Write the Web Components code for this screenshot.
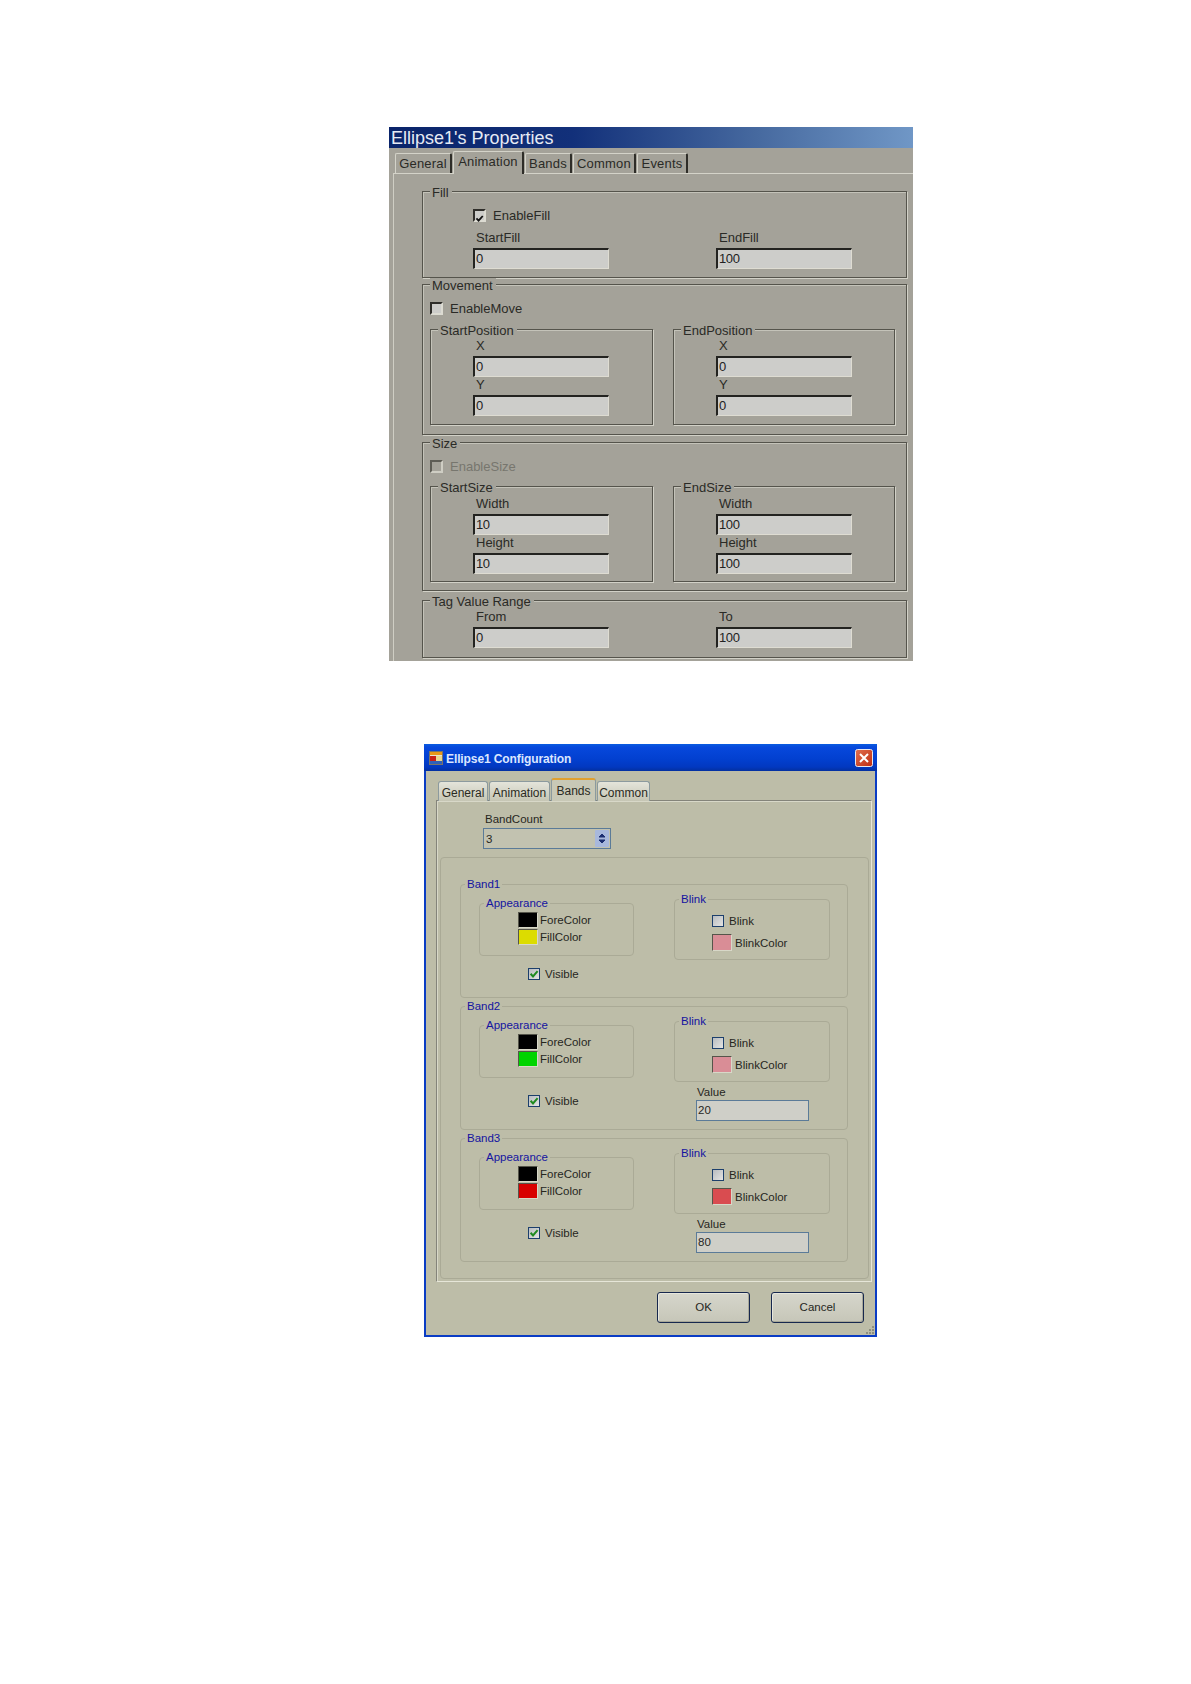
<!DOCTYPE html>
<html>
<head>
<meta charset="utf-8">
<title>Ellipse1</title>
<style>
  html, body { margin: 0; background: #fff; }
  body { font-family: "Liberation Sans", Arial, sans-serif; }
  .page { display: flex; flex-direction: column; align-items: flex-start; padding: 127px 0 0 389px; }
  .page > band-window { margin: 83px 0 0 35px; }
</style>
</head>
<body>
<div class="page">
  <props-window title="Ellipse1's Properties">
    <classic-tab slot="tabs" style="width:57px">General</classic-tab>
    <classic-tab slot="tabs" style="width:71px" active>Animation</classic-tab>
    <classic-tab slot="tabs" style="width:47px">Bands</classic-tab>
    <classic-tab slot="tabs" style="width:63px">Common</classic-tab>
    <classic-tab slot="tabs" style="width:51px">Events</classic-tab>

    <classic-group legend="Fill" style="padding:15px 0 8px 50px">
      <classic-check label="EnableFill" checked></classic-check>
      <div style="display:grid;grid-template-columns:243px 136px;margin-top:7px">
        <classic-field label="StartFill" value="0"></classic-field>
        <classic-field label="EndFill" value="100"></classic-field>
      </div>
    </classic-group>

    <classic-group legend="Movement" style="margin-top:6px;padding:15px 0 9px 7px">
      <classic-check label="EnableMove"></classic-check>
      <div style="display:flex;gap:20px;margin-top:13px">
        <classic-group legend="StartPosition" style="width:223px;padding:8px 0 8px 42px">
          <classic-field label="X" value="0"></classic-field>
          <classic-field label="Y" value="0"></classic-field>
        </classic-group>
        <classic-group legend="EndPosition" style="width:222px;padding:8px 0 8px 42px">
          <classic-field label="X" value="0"></classic-field>
          <classic-field label="Y" value="0"></classic-field>
        </classic-group>
      </div>
    </classic-group>

    <classic-group legend="Size" style="margin-top:7px;padding:15px 0 8px 7px">
      <classic-check label="EnableSize" disabled></classic-check>
      <div style="display:flex;gap:20px;margin-top:12px">
        <classic-group legend="StartSize" style="width:223px;padding:9px 0 7px 42px">
          <classic-field label="Width" value="10"></classic-field>
          <classic-field label="Height" value="10"></classic-field>
        </classic-group>
        <classic-group legend="EndSize" style="width:222px;padding:9px 0 7px 42px">
          <classic-field label="Width" value="100"></classic-field>
          <classic-field label="Height" value="100"></classic-field>
        </classic-group>
      </div>
    </classic-group>

    <classic-group legend="Tag Value Range" style="margin-top:9px;padding:8px 0 9px 50px">
      <div style="display:grid;grid-template-columns:243px 136px">
        <classic-field label="From" value="0"></classic-field>
        <classic-field label="To" value="100"></classic-field>
      </div>
    </classic-group>
  </props-window>

  <band-window title="Ellipse1 Configuration">
    <xp-tab slot="tabs" style="width:50px">General</xp-tab>
    <xp-tab slot="tabs" style="width:61px">Animation</xp-tab>
    <xp-tab slot="tabs" style="width:45px" active>Bands</xp-tab>
    <xp-tab slot="tabs" style="width:53px">Common</xp-tab>

    <band-count slot="head" label="BandCount" value="3"></band-count>

    <band-group name="Band1" fill="#dcdc00" blink="#d98d96" gap="10" tail="15"></band-group>
    <band-group name="Band2" fill="#00d400" blink="#d98d96" gap="15" tail="12" value="20"></band-group>
    <band-group name="Band3" fill="#d80000" blink="#d94c50" gap="15" tail="12" value="80"></band-group>
  </band-window>
</div>

<script>
const mark = (color) => `<svg viewBox="0 0 10 10" width="100%" height="100%"><path d="M1.6 4.8 L4 7.4 L8.6 2.2" fill="none" stroke="${color}" stroke-width="2"/></svg>`;

function shadow(el, html) {
  const root = el.attachShadow({ mode: 'open' });
  root.innerHTML = html;
  return root;
}

/* ---------- first dialog, classic grey look ---------- */

class PropsWindow extends HTMLElement {
  connectedCallback() {
    const root = shadow(this, `
<style>
  :host { display: block; width: 524px; height: 534px; overflow: hidden; box-sizing: border-box;
          background: #a4a299; font-family: "Liberation Sans", Arial, sans-serif; font-size: 13px; color: #1c1c18; }
  .bar { height: 21px; padding-left: 2px; line-height: 23px; font-size: 18px; color: #e6eaf4;
         background: linear-gradient(90deg, #0a246a 0%, #12307a 35%, #46699f 70%, #7097c6 100%); }
  .tabs { display: flex; align-items: flex-end; height: 25px; padding-left: 6px; }
  .panel { margin-left: 4px; padding: 17px 6px 0 28px; border-top: 1px solid #d4d3c9; border-left: 1px solid #cfcec4; height: 100%; box-sizing: border-box; }
</style>
<div class="bar"></div>
<div class="tabs"><slot name="tabs"></slot></div>
<div class="panel"><slot></slot></div>`);
    root.querySelector('.bar').textContent = this.getAttribute('title');
    this.removeAttribute('title');
  }
}
customElements.define('props-window', PropsWindow);

class ClassicTab extends HTMLElement {
  connectedCallback() {
    shadow(this, `
<style>
  :host { display: block; box-sizing: border-box; height: 20px; margin-right: 1px; text-align: center; line-height: 20px; white-space: nowrap;
          border-top: 1px solid #d4d3c9; border-left: 1px solid #d4d3c9; border-right: 2px solid #2e2d28; border-radius: 2px 2px 0 0; color: #2a2a26; letter-spacing: .2px; }
  :host([active]) { height: 23px; line-height: 20px; margin-bottom: -1px; background: #a4a299; position: relative; }
</style>
<slot></slot>`);
  }
}
customElements.define('classic-tab', ClassicTab);

class ClassicGroup extends HTMLElement {
  connectedCallback() {
    const root = shadow(this, `
<style>
  :host { display: block; position: relative; box-sizing: border-box; border: 1px solid #55544c;
          box-shadow: 1px 1px 0 #d2d1c7, inset 1px 1px 0 #c4c3b9; }
  .legend { position: absolute; left: 7px; top: -7px; height: 16px; line-height: 16px; padding: 0 3px 0 2px; background: #a4a299; color: #2a2a26; white-space: nowrap; }
</style>
<div class="legend"></div>
<slot></slot>`);
    root.querySelector('.legend').textContent = this.getAttribute('legend');
  }
}
customElements.define('classic-group', ClassicGroup);

class ClassicCheck extends HTMLElement {
  connectedCallback() {
    const checked = this.hasAttribute('checked');
    const root = shadow(this, `
<style>
  :host { display: flex; align-items: center; gap: 7px; height: 16px; color: #2a2a26; }
  :host([disabled]) { color: #77766e; }
  .box { width: 9px; height: 9px; border: 2px solid; border-color: #2f2e2a #dcdbd2 #dcdbd2 #2f2e2a; background: #cdcdca; }
  :host([disabled]) .box { background: #a4a299; border-color: #5e5d55 #cfcec4 #cfcec4 #5e5d55; }
</style>
<div class="box">${checked ? mark('#111') : ''}</div><span></span>`);
    root.querySelector('span').textContent = this.getAttribute('label');
  }
}
customElements.define('classic-check', ClassicCheck);

class ClassicField extends HTMLElement {
  connectedCallback() {
    const root = shadow(this, `
<style>
  :host { display: block; width: 136px; }
  .label { height: 16px; line-height: 16px; padding-left: 3px; margin-bottom: 2px; color: #2a2a26; }
  .input { box-sizing: border-box; height: 21px; line-height: 18px; padding-left: 1px; background: #cdcdca; color: #222; letter-spacing: -.4px;
           border: 2px solid; border-color: #232320 #dedcd2 #dedcd2 #232320; border-top-width: 2px; border-right-width: 1px; border-bottom-width: 1px; }
</style>
<div class="label"></div><div class="input"></div>`);
    root.querySelector('.label').textContent = this.getAttribute('label');
    root.querySelector('.input').textContent = this.getAttribute('value');
  }
}
customElements.define('classic-field', ClassicField);

/* ---------- second dialog, xp look ---------- */

class BandWindow extends HTMLElement {
  connectedCallback() {
    const root = shadow(this, `
<style>
  :host { display: block; width: 453px; height: 593px; box-sizing: border-box; background: #bdbda8; border: 2px solid #0a3cc4; border-top: 0;
          font-family: "Liberation Sans", Arial, sans-serif; font-size: 11.5px; color: #26261e; position: relative; }
  .bar { display: flex; align-items: center; height: 27px; margin: 0 -2px; padding: 0 4px 0 5px; box-sizing: border-box;
         background: linear-gradient(180deg, #0a5ce0 0%, #0748dc 12%, #0240d0 55%, #0238c0 85%, #0330a0 100%); }
  .bar svg.app { width: 14px; height: 14px; margin-right: 3px; }
  .title { flex: 1; padding-top: 2px; color: #dbe6ff; font-weight: bold; font-size: 12px; letter-spacing: -.1px; }
  .close { width: 18px; height: 18px; }
  .tabs { display: flex; align-items: flex-end; gap: 1px; height: 30px; padding-left: 12px; position: relative; z-index: 1; margin-bottom: -1px; }
  .panel { box-sizing: border-box; margin: 0 3px 0 10px; height: 482px; border: 1px solid #84847a; border-right-color: #e6e6d8; border-bottom-color: #e6e6d8;
           box-shadow: inset 1px 1px 0 #d8d8c8; padding: 10px 2px 0 3px; }
  .inner { box-sizing: border-box; height: 422px; margin-top: 8px; border: 1px solid #aaaa96; border-radius: 4px; padding: 26px 20px 0 19px; }
  .buttons { display: flex; gap: 21px; padding: 10px 0 0 231px; }
  .grip { position: absolute; right: 0; bottom: 0; width: 10px; height: 10px; }
</style>
<div class="bar">
  <svg class="app" viewBox="0 0 14 14">
    <rect x="0.5" y="0.5" width="13" height="13" fill="#e8e4d0" stroke="#7a7468"/>
    <rect x="1" y="1" width="12" height="3" fill="#e89818"/>
    <rect x="1" y="5" width="6" height="5" fill="#c82018"/>
    <rect x="7" y="5" width="6" height="5" fill="#e8d890"/>
    <rect x="1" y="10" width="12" height="3" fill="#3060b8"/>
  </svg>
  <div class="title"></div>
  <svg class="close" viewBox="0 0 18 18">
    <defs><linearGradient id="red" x1="0" y1="0" x2="1" y2="1"><stop offset="0" stop-color="#e07050"/><stop offset="1" stop-color="#c02c10"/></linearGradient></defs>
    <rect x="0.5" y="0.5" width="17" height="17" rx="2" fill="url(#red)" stroke="#e8e8f0"/>
    <path d="M5 5 L13 13 M13 5 L5 13" stroke="#fff" stroke-width="2"/>
  </svg>
</div>
<div class="tabs"><slot name="tabs"></slot></div>
<div class="panel">
  <slot name="head"></slot>
  <div class="inner"><slot></slot></div>
</div>
<div class="buttons"><xp-button>OK</xp-button><xp-button>Cancel</xp-button></div>
<svg class="grip" viewBox="0 0 10 10" fill="#8e8e7e">
  <rect x="7" y="1" width="2" height="2"/><rect x="4" y="4" width="2" height="2"/><rect x="7" y="4" width="2" height="2"/>
  <rect x="1" y="7" width="2" height="2"/><rect x="4" y="7" width="2" height="2"/><rect x="7" y="7" width="2" height="2"/>
</svg>`);
    root.querySelector('.title').textContent = this.getAttribute('title');
    this.removeAttribute('title');
  }
}
customElements.define('band-window', BandWindow);

class XpTab extends HTMLElement {
  connectedCallback() {
    shadow(this, `
<style>
  :host { display: block; box-sizing: border-box; height: 20px; line-height: 22px; text-align: center; white-space: nowrap; font-size: 12px;
          border: 1px solid #8c9a9e; border-bottom: 0; border-radius: 3px 3px 0 0; background: linear-gradient(180deg, #e4e4da, #c6c6b4); color: #2a2a22; }
  :host([active]) { height: 23px; line-height: 22px; border-top: 2px solid #e0a030; background: #c8c8b6; }
</style>
<slot></slot>`);
  }
}
customElements.define('xp-tab', XpTab);

class XpButton extends HTMLElement {
  connectedCallback() {
    shadow(this, `
<style>
  :host { display: block; box-sizing: border-box; width: 93px; height: 31px; line-height: 29px; text-align: center; border: 1px solid #17284e; border-radius: 3px;
          background: linear-gradient(180deg, #d6d6cc, #c6c6b8); box-shadow: inset -1px -1px 0 #a8a898, inset 1px 1px 0 #e6e6dc; color: #26261e; }
</style>
<slot></slot>`);
  }
}
customElements.define('xp-button', XpButton);

class BandCount extends HTMLElement {
  connectedCallback() {
    const root = shadow(this, `
<style>
  :host { display: block; padding-left: 43px; }
  .label { height: 16px; line-height: 16px; padding-left: 2px; margin-bottom: 1px; }
  .spin { box-sizing: border-box; display: flex; align-items: center; justify-content: space-between; width: 128px; height: 21px; padding: 0 1px 0 2px;
          border: 1px solid #5b7b98; background: #c2c2b0; }
  .btn { width: 14px; height: 17px; }
</style>
<div class="label"></div>
<div class="spin"><span></span>
  <svg class="btn" viewBox="0 0 14 17">
    <rect width="14" height="17" rx="1" fill="#a8b8dc"/>
    <path d="M4 7 L7 4 L10 7Z M4 10 L7 13 L10 10Z" fill="#1c2e70" stroke="#1c2e70"/>
  </svg>
</div>`);
    root.querySelector('.label').textContent = this.getAttribute('label');
    root.querySelector('span').textContent = this.getAttribute('value');
  }
}
customElements.define('band-count', BandCount);

class XpCheck extends HTMLElement {
  connectedCallback() {
    const checked = this.hasAttribute('checked');
    const root = shadow(this, `
<style>
  :host { display: flex; align-items: center; gap: 5px; height: 16px; }
  .box { box-sizing: border-box; width: 12px; height: 12px; border: 1px solid #1c3f6c; background: linear-gradient(135deg, #b8bcc0, #e4e4e2); }
</style>
<div class="box">${checked ? mark('#1f8a20') : ''}</div><span></span>`);
    root.querySelector('span').textContent = this.getAttribute('label');
  }
}
customElements.define('xp-check', XpCheck);

class ColorRow extends HTMLElement {
  connectedCallback() {
    const root = shadow(this, `
<style>
  :host { display: flex; align-items: center; gap: var(--swatch-gap, 2px); }
  .swatch { box-sizing: border-box; width: 20px; height: var(--swatch-h, 16px); border: 1px solid; border-color: #55554a #d8d8c8 #d8d8c8 #55554a; }
</style>
<div class="swatch"></div><span></span>`);
    root.querySelector('.swatch').style.background = this.getAttribute('color');
    root.querySelector('span').textContent = this.getAttribute('label');
  }
}
customElements.define('color-row', ColorRow);

class XpGroup extends HTMLElement {
  connectedCallback() {
    const root = shadow(this, `
<style>
  :host { display: block; position: relative; box-sizing: border-box; border: 1px solid #aaaa96; border-radius: 4px; }
  .legend { position: absolute; left: 4px; top: -9px; height: 16px; line-height: 16px; padding: 0 2px; background: #bdbda8; color: #1414a0; white-space: nowrap; }
</style>
<div class="legend"></div>
<slot></slot>`);
    root.querySelector('.legend').textContent = this.getAttribute('legend');
  }
}
customElements.define('xp-group', XpGroup);

class BandGroup extends HTMLElement {
  connectedCallback() {
    const value = this.getAttribute('value');
    shadow(this, `
<style>
  :host { display: block; margin-bottom: 8px; }
  .cols { display: grid; grid-template-columns: 213px 1fr; }
  .left { padding: 18px 0 ${this.getAttribute('tail')}px 18px; }
  .right { padding: 14px 0 8px 0; }
  .appearance { width: 155px; height: 53px; padding: 8px 0 0 38px; display: flex; flex-direction: column; gap: 1px; }
  .blink { width: 156px; height: 61px; padding: 13px 0 0 37px; display: flex; flex-direction: column; --swatch-gap: 3px; --swatch-h: 17px; }
  .blink color-row { margin-top: 5px; }
  .visible { margin: ${this.getAttribute('gap')}px 0 0 49px; }
  .value { margin: 2px 0 0 22px; width: 113px; }
  .value div { height: 16px; line-height: 16px; padding-left: 1px; }
  .value output { display: block; box-sizing: border-box; height: 21px; line-height: 19px; padding-left: 1px; border: 1px solid #5b7b98; background: #cfcfc8; }
</style>
<xp-group class="band" legend="${this.getAttribute('name')}">
  <div class="cols">
    <div class="left">
      <xp-group class="appearance" legend="Appearance">
        <color-row color="#000" label="ForeColor"></color-row>
        <color-row color="${this.getAttribute('fill')}" label="FillColor"></color-row>
      </xp-group>
      <xp-check class="visible" label="Visible" checked></xp-check>
    </div>
    <div class="right">
      <xp-group class="blink" legend="Blink">
        <xp-check label="Blink"></xp-check>
        <color-row color="${this.getAttribute('blink')}" label="BlinkColor"></color-row>
      </xp-group>
      ${value ? `<div class="value"><div>Value</div><output>${value}</output></div>` : ''}
    </div>
  </div>
</xp-group>`);
  }
}
customElements.define('band-group', BandGroup);
</script>
</body>
</html>
